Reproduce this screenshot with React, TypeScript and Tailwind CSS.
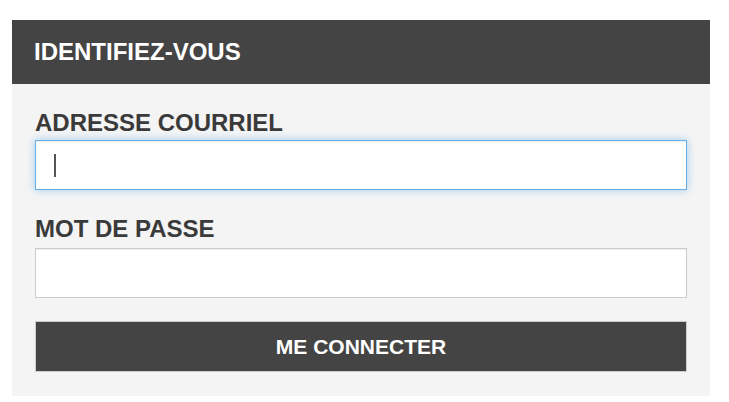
export default function App() {
  return (
    <div className="min-h-screen bg-white pt-5 pl-3 font-['Liberation_Sans',Arial,sans-serif]">
      <div className="w-[698px] bg-[#f4f4f4]">
        {/* Header */}
        <div className="h-16 flex items-center px-[22px] bg-[#444444]">
          <h2 className="text-[24px] leading-6 font-bold text-white">IDENTIFIEZ-VOUS</h2>
        </div>

        {/* Form */}
        <form className="px-[23px] pt-[27px] pb-[24px]" onSubmit={(e) => e.preventDefault()}>
          <label className="block text-[24px] leading-6 font-bold text-[#3a3a3a] mb-[5px]">
            ADRESSE COURRIEL
          </label>
          <div className="relative h-[50px] bg-white border border-[#66afe9] shadow-[inset_0_1px_1px_rgba(0,0,0,0.075),0_0_8px_rgba(102,175,233,0.6)]">
            <span className="absolute left-[18px] top-[13px] w-[2px] h-[23px] bg-[#555555]" />
          </div>

          <label className="block text-[24px] leading-6 font-bold text-[#3a3a3a] mt-[27px] mb-[7px]">
            MOT DE PASSE
          </label>
          <div className="h-[50px] bg-white border border-[#cccccc] shadow-[inset_0_1px_1px_rgba(0,0,0,0.075)]" />

          <button
            type="submit"
            className="mt-[23px] w-full h-[51px] bg-[#444444] border border-[#cccccc] text-white text-[21px] font-bold"
          >
            ME CONNECTER
          </button>
        </form>
      </div>
    </div>
  )
}
